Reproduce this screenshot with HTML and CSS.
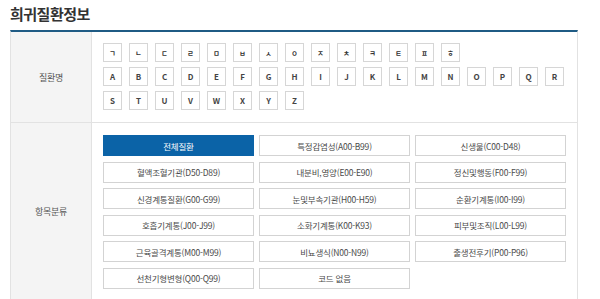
FILE: index.html
```html
<!DOCTYPE html>
<html lang="ko">
<head>
<meta charset="utf-8">
<link rel="stylesheet" href="styles.css">
</head>
<body>
<div class="page">
  <h1 class="title">희귀질환정보</h1>
  <div class="table">
    <div class="row">
      <div class="head">질환명</div>
      <div class="cell">
        <ul class="letters ko">
          <li>ㄱ</li><li>ㄴ</li><li>ㄷ</li><li>ㄹ</li><li>ㅁ</li><li>ㅂ</li><li>ㅅ</li><li>ㅇ</li><li>ㅈ</li><li>ㅊ</li><li>ㅋ</li><li>ㅌ</li><li>ㅍ</li><li>ㅎ</li>
        </ul>
        <ul class="letters en">
          <li>A</li><li>B</li><li>C</li><li>D</li><li>E</li><li>F</li><li>G</li><li>H</li><li>I</li><li>J</li><li>K</li><li>L</li><li>M</li><li>N</li><li>O</li><li>P</li><li>Q</li><li>R</li><li>S</li><li>T</li><li>U</li><li>V</li><li>W</li><li>X</li><li>Y</li><li>Z</li>
        </ul>
      </div>
    </div>
    <div class="row">
      <div class="head">항목분류</div>
      <div class="cell">
        <ul class="cats">
          <li class="on">전체질환</li>
          <li>특정감염성(A00-B99)</li>
          <li>신생물(C00-D48)</li>
          <li>혈액조혈기관(D50-D89)</li>
          <li>내분비,영양(E00-E90)</li>
          <li>정신및행동(F00-F99)</li>
          <li>신경계통질환(G00-G99)</li>
          <li>눈및부속기관(H00-H59)</li>
          <li>순환기계통(I00-I99)</li>
          <li>호흡기계통(J00-J99)</li>
          <li>소화기계통(K00-K93)</li>
          <li>피부및조직(L00-L99)</li>
          <li>근육골격계통(M00-M99)</li>
          <li>비뇨생식(N00-N99)</li>
          <li>출생전후기(P00-P96)</li>
          <li>선천기형변형(Q00-Q99)</li>
          <li>코드 없음</li>
        </ul>
      </div>
    </div>
  </div>
</div>
</body>
</html>
```
FILE: styles.css
```css
html, body {
  margin: 0;
  padding: 0;
  background: #fff;
}
body {
  font-family: "Noto Sans CJK KR", "Noto Sans", sans-serif;
  color: #555;
}
.page {
  padding: 4px 0 0 10px;
  width: 568px;
}
.title {
  margin: 0;
  height: 26px;
  font-size: 15px;
  line-height: 20px;
  font-weight: 700;
  letter-spacing: -0.5px;
  color: #333;
}
.table {
  border-top: 2px solid #1f5b84;
  border-left: 1px solid #e2e2e2;
  border-right: 1px solid #e2e2e2;
}
.row {
  display: flex;
  border-bottom: 1px solid #e2e2e2;
}
.head {
  width: 80px;
  flex: none;
  background: #f4f4f4;
  border-right: 1px solid #e2e2e2;
  display: flex;
  align-items: center;
  justify-content: center;
  font-size: 9px;
  letter-spacing: -0.3px;
  color: #555;
}
.cell {
  flex: 1;
  padding: 11px 12px 12px 11px;
  display: flex;
  flex-direction: column;
  gap: 5px;
}
ul {
  list-style: none;
  margin: 0;
  padding: 0;
}
.letters {
  display: flex;
  flex-wrap: wrap;
  column-gap: 7px;
  row-gap: 5px;
}
.letters li {
  box-sizing: border-box;
  width: 19px;
  height: 19px;
  border: 1px solid #d6d6d6;
  display: flex;
  align-items: center;
  justify-content: center;
  font-size: 8px;
  font-weight: 700;
  color: #444;
}
.letters.ko li {
  font-size: 7px;
  color: #333;
}
.cats {
  display: grid;
  grid-template-columns: repeat(3, 151px);
  column-gap: 5px;
  row-gap: 5.5px;
  padding-top: 1px;
}
.cats li {
  box-sizing: border-box;
  height: 21px;
  border: 1px solid #d3d3d3;
  display: flex;
  align-items: center;
  justify-content: center;
  font-size: 8.5px;
  letter-spacing: -0.2px;
  color: #4a4a4a;
}
.cats li.on {
  background: #0b63a7;
  border-color: #0b63a7;
  color: #fff;
}
```
